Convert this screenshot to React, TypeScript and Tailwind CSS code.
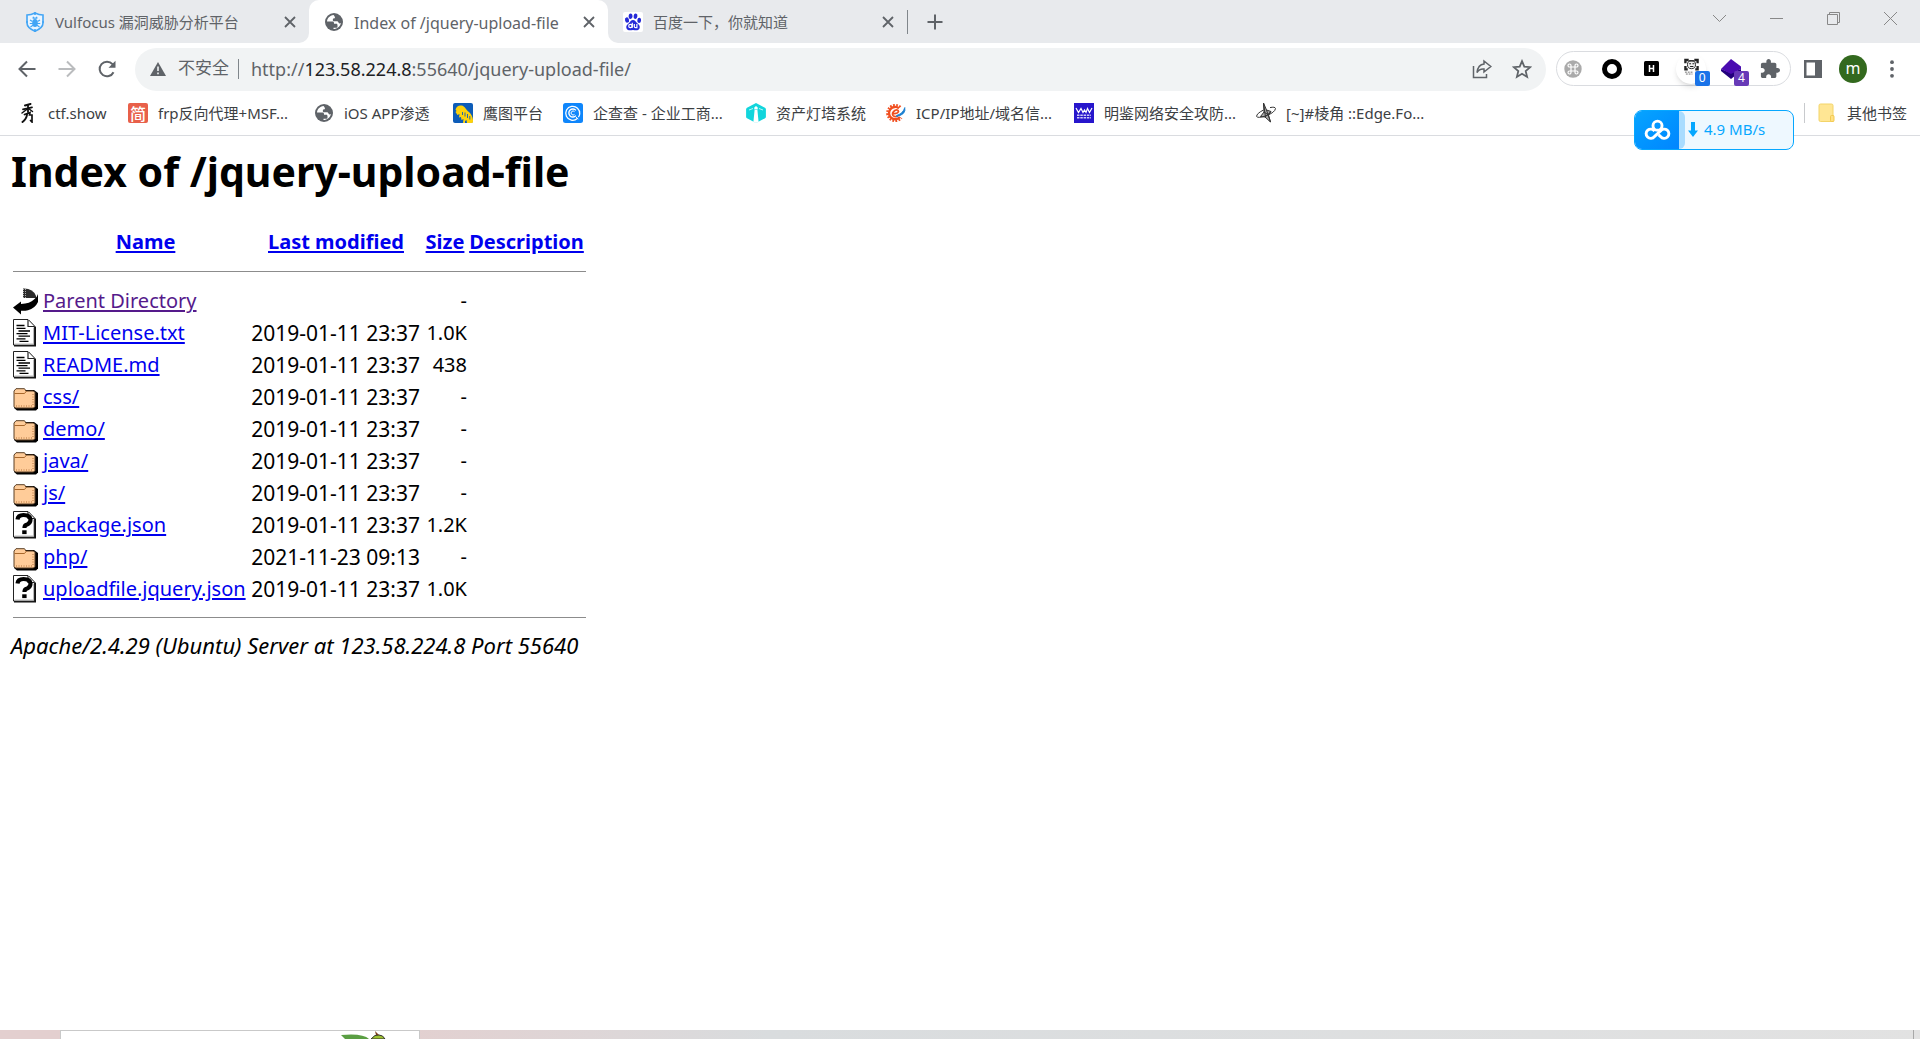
import React from "react";

const ui = "font-['Noto_Sans','Noto_Sans_CJK_SC',sans-serif]";

/* ---------- tab and bookmark icons ---------- */

const ShieldIcon = () => (
  <svg width="20" height="20" viewBox="0 0 20 20" fill="none" className="shrink-0">
    <path d="M10 1 Q14 3 18 3 V11 Q18 16 10 19.2 Q2 16 2 11 V3 Q6 3 10 1Z" stroke="#42a5f5" strokeWidth="1.6" fill="#eaf5ff" />
    <ellipse cx="10" cy="11" rx="2.8" ry="4" fill="#42a5f5" />
    <path d="M7.6 6.2h4.8M5 8l2.5 1.5M15 8l-2.500 1.500M4.800 11.500h10.400M5.500 15l2.500-1.800M14.500 15l-2.500-1.800M8 4.800l1 1.700M12 4.800l-1 1.700" stroke="#42a5f5" strokeWidth="1.200" />
    <path d="M10 0v3M10 17v3M1 10h2M17 10h2" stroke="#42a5f5" strokeWidth="1.600" />
  </svg>
);

const GlobeIcon = () => (
  <svg width="20" height="20" viewBox="0 0 20 20" className="shrink-0">
    <circle cx="10" cy="10" r="9" fill="#5f6368" />
    <path d="M9.500 3C5.800 3.500 3.200 6.200 3 9.500h5.500c1 0 1.500.6 1.500 1.500v.8h2.200c1 0 1.300.7 1.300 1.400v1.300c0 .8-.6 1.300-1.400 1.300h-2.600v1.300c3.600 0 6.700-2.500 7.400-6-.9.7-2 .5-2.400-.5-.3-.9-.9-1.300-1.900-1.300h-2.200c-1 0-1.600-.7-1.600-1.600s.6-1.500 1.500-1.500h.6V5.200c0-.8-.7-1.300-1.400-2.200z" fill="#fff" />
  </svg>
);

const BaiduIcon = () => (
  <svg width="20" height="20" viewBox="0 0 20 20" className="shrink-0">
    <rect width="20" height="20" rx="2" fill="#fff" />
    <g fill="#2529d8">
      <ellipse cx="4" cy="8" rx="2" ry="2.700" transform="rotate(-15 4 8)" />
      <ellipse cx="7.600" cy="4.200" rx="1.900" ry="2.800" />
      <ellipse cx="12.500" cy="4.200" rx="1.900" ry="2.800" transform="rotate(10 12.500 4.200)" />
      <ellipse cx="16.200" cy="8.400" rx="1.900" ry="2.600" transform="rotate(10 16.200 8.400)" />
      <path d="M10 8c2 0 2.800 1.800 4 3 1.500 1.400 3.200 2.300 2.700 4.800-.6 3.200-3.700 2.500-6.700 2.300-3 .2-6 .9-6.700-2.300-.4-2.500 1.300-3.400 2.800-4.800C7.300 9.800 8 8 10 8z" />
    </g>
    <g fill="none" stroke="#fff" strokeWidth="1.200">
      <circle cx="7.400" cy="14" r="1.700" />
      <path d="M9.300 10.800v5M11.300 12v2.500q0 1.200 1.300 1.200h1.300V12" />
    </g>
  </svg>
);

const CtfIcon = () => (
  <svg width="20" height="20" viewBox="0 0 20 20" fill="none" stroke="#111" strokeLinecap="round" className="shrink-0">
    <path d="M7 2.500 12.500 1" strokeWidth="2" />
    <path d="M5 6.300 14 4.300M10 2v7" strokeWidth="1.800" />
    <path d="M10 5.500 4 10M10.500 5.500l4 3" strokeWidth="1.500" />
    <path d="M6.500 11.500 12 9.500 11.500 12l2.500 0V19l-1.500-1.500" strokeWidth="1.700" />
    <path d="M9 11.500Q8.500 16 4.500 19" strokeWidth="2" />
  </svg>
);

const JianIcon = () => (
  <span className="flex size-5 shrink-0 items-center justify-center rounded-xs bg-[#e8604a] font-['Noto_Sans_CJK_SC',sans-serif] text-base leading-none font-medium text-white">
    简
  </span>
);

const EagleIcon = () => (
  <svg width="20" height="20" viewBox="0 0 20 20" className="shrink-0">
    <rect width="20" height="20" rx="2" fill="#0d5cb8" />
    <path d="M2.500 6.500C3.500 3 6 2 8.500 2.500 12 3 13 7 16 9c2 1.500 3.800 5 4 8v1.500q0 1.500-1.500 1.500H14l-.5-3-1.500 1v2H10l.5-4-2 1-.5-3-2 .5.500-3.500-2 1L2.500 9l1-1z" fill="#fdd10a" />
    <path d="M9.500 9v3M12 9.500v4M14.500 11v4M16.800 13v3.500" stroke="#0d5cb8" strokeWidth=".9" />
  </svg>
);

const QccIcon = () => (
  <svg width="20" height="20" viewBox="0 0 20 20" fill="none" className="shrink-0">
    <rect width="20" height="20" rx="2.500" fill="#0f86fb" />
    <path d="M14.300 15.600A7 7 0 1 1 16.700 11q-.2 1.800-1.300 3" stroke="#fff" strokeWidth="1.300" />
    <path d="M12.900 12.600A4 4 0 1 1 12.900 7.400" stroke="#fff" strokeWidth="1.400" />
    <path d="M11.500 11.400a2 2 0 1 1 0-2.800M12.800 14l2.500 2" stroke="#fff" strokeWidth="1" />
  </svg>
);

const LighthouseIcon = () => (
  <svg width="20" height="20" viewBox="0 0 20 20" className="shrink-0">
    <path d="M10 0 19 4.800q.9.500.9 1.500v7.400q0 1-.9 1.500L10 20 1 15.200q-.9-.5-.9-1.500V6.300q0-1 .9-1.500z" fill="#12d5dc" />
    <path d="M8.600 7h2.800L12.600 19 10 20 7.400 19zM8.300 4.500 10 3l1.700 1.500v2H8.300z" fill="#fff" />
    <path d="M7 5.500 3 7M13 5.500 17 7" stroke="#b8f5f6" strokeWidth="1" />
  </svg>
);

const IcpIcon = () => (
  <svg width="20" height="20" viewBox="0 0 20 20" fill="none" className="shrink-0">
    <path d="M14.500 4A8 8 0 1 0 15.500 15" stroke="#f04e1f" strokeWidth="2.200" strokeDasharray="1.700 1.360" />
    <path d="M13 5.200A6.200 6.200 0 1 0 14 14" stroke="#f04e1f" strokeWidth="2.400" />
    <path d="M6.500 10.500Q11.500 11 12.500 8.500 12 6 8.800 7.500 5.500 10 7 12.500 8.500 14.500 12 13" stroke="#f04e1f" strokeWidth="1.700" />
    <path d="M10.500 12.500Q17 10.500 18.800 4.500 20.500 11.500 10.500 13.500z" fill="#1b7fd0" stroke="#1b7fd0" strokeWidth=".8" />
  </svg>
);

const MingIcon = () => (
  <svg width="20" height="20" viewBox="0 0 20 20" fill="none" className="shrink-0">
    <rect width="20" height="20" fill="#2716cc" />
    <path d="M2 5 4.500 9.500 7 5.500 9 9.500 10.500 7 12 9.500 13.500 5.500 15.500 9.500 18 5" stroke="#fff" strokeWidth="1.200" />
    <path d="M3 12.200h14M3 14.800h14" stroke="#cfcaf7" strokeWidth="1.600" strokeDasharray="2.500 .8" />
  </svg>
);

const EdgeForumIcon = () => (
  <svg width="20" height="20" viewBox="0 0 20 20" fill="none" stroke="#333" strokeWidth="1" className="shrink-0">
    <path d="M7.500 0 10.500 7 15 8.500 12.500 12 14.500 19 9 14 4.500 13.500 8 9z" fill="#aaa" />
    <path d="M7.500 0 9.500 14M14.500 19 10.500 7M8 9l4.500 3M15 8.500 9 14" />
    <path d="M14 4.600Q19 3.500 19.500 5.500 19 9.500 10 12.800 2 15.500.6 13.500.5 10.500 7.500 7" />
  </svg>
);

const FolderTabIcon = () => (
  <svg width="20" height="20" viewBox="0 0 20 20" className="shrink-0">
    <path d="M3.500 1h11q1.500 0 1.500 1.500V13h.5v4.500q0 1-1 1h-12Q2 18.500 2 17V2.500Q2 1 3.500 1z" fill="#ffe694" stroke="#f3d469" />
    <rect x="13.500" y="12.500" width="3.500" height="6" rx="1" fill="#ffe082" stroke="#f3c94f" />
  </svg>
);

/* ---------- directory listing icons ---------- */

const BackIcon = () => (
  <svg width="25" height="28" viewBox="0 0 25 28">
    <path d="M10 1.500Q20 1 23 9V11L10 11z" fill="#2b2b2b" />
    <path d="M10 2.500h4M10 4.500h4M10 6.500h4M10 8.500h4M10 10.500h4" stroke="#aaa" strokeWidth="1" strokeDasharray="1 1" />
    <path d="M25 7V15Q22 21.500 15 23.200 12 24 8 23.800V27.500L0 20.500 8 14.500V17Q17 16.500 21 12.500 24 10.500 25 7z" fill="#000" />
  </svg>
);

const Sheet = ({ children }: { children: React.ReactNode }) => (
  <svg width="25" height="28" viewBox="0 0 25 28" fill="none">
    <path d="M1 1H16L23 8V27.500H1z" fill="#111" />
    <path d="M.5.500H15L21.500 7.500V26H.5z" fill="#fff" stroke="#222" strokeWidth="1" />
    <path d="M20.500 8.500V25H1.500" stroke="#bbb" strokeWidth="1" />
    <path d="M15 1V7.500H21.500" stroke="#222" strokeWidth="1.200" fill="#fff" />
    {children}
  </svg>
);

const TextIcon = () => (
  <Sheet>
    <path d="M3.500 6.500h8M3.500 9.300h9M5.500 12H17M3.500 14.600h11M5.500 17.200H17M3.500 19.800h9M6.500 22.400h9" stroke="#000" strokeWidth="1.300" />
  </Sheet>
);

const UnknownIcon = () => (
  <Sheet>
    <path d="M4.500 8.500Q5 4 10.500 4q6.500 0 7 4.500 0 4-4.500 5.500-1.500.6-1.500 3" stroke="#000" strokeWidth="4.200" />
    <path d="M9.200 19.300h4.400v3.800h-4.400z" fill="#000" />
  </Sheet>
);

const FolderIcon = () => (
  <svg width="25" height="28" viewBox="0 0 25 28" fill="none">
    <path d="M3 7H21l4 3V25.500l-2 2H4L1 25z" fill="#000" />
    <path d="M1 8 3 5.700H11.500L13 8H20.500L22 9.500V23.500L20.500 25H2.500L1 23.500z" fill="#ffcc99" stroke="#5a3f25" strokeWidth="1" />
    <path d="M1.500 10.500H11.500L13.500 8" stroke="#a8672b" strokeWidth="1" />
    <path d="M3 23h17M20 11v12" stroke="#b5733a" strokeWidth="1" strokeDasharray="1 1.500" />
  </svg>
);

/* ---------- browser chrome ---------- */

const CloseGlyph = () => (
  <svg width="12" height="12" viewBox="0 0 12 12" stroke="#5f6368" strokeWidth="1.800">
    <path d="M1 1 11 11M11 1 1 11" />
  </svg>
);

function Tab({ icon, title, active }: { icon: React.ReactNode; title: string; active?: boolean }) {
  return (
    <div
      className={
        "relative flex h-full w-[299px] items-center gap-2.5 pr-[11px] pl-[15px] " +
        (active ? "rounded-t-[10px] bg-white" : "")
      }
    >
      {active && (
        <>
          <span className="absolute bottom-0 -left-2.5 size-2.5 bg-white before:block before:size-full before:rounded-br-[10px] before:bg-[#e8eaed]" />
          <span className="absolute -right-2.5 bottom-0 size-2.5 bg-white before:block before:size-full before:rounded-bl-[10px] before:bg-[#e8eaed]" />
        </>
      )}
      {icon}
      <span className={"flex-1 truncate pt-0.5 text-[#5f6368] " + (active ? "text-base" : "text-[15px]")}>{title}</span>
      <button aria-label={"Close " + title} className="flex size-4 items-center justify-center">
        <CloseGlyph />
      </button>
    </div>
  );
}

function TabStrip() {
  return (
    <div className="flex h-[43px] shrink-0 items-center bg-[#e8eaed] pl-2.5">
      <Tab icon={<ShieldIcon />} title="Vulfocus 漏洞威胁分析平台" />
      <Tab icon={<GlobeIcon />} title="Index of /jquery-upload-file" active />
      <Tab icon={<BaiduIcon />} title="百度一下，你就知道" />
      <div className="mr-[19px] h-6 w-px bg-[#80868b]" />
      <button aria-label="New tab">
        <svg width="16" height="16" viewBox="0 0 16 16" stroke="#5f6368" strokeWidth="2">
          <path d="M8 0.500v15M0.500 8h15" />
        </svg>
      </button>
      <div className="ml-auto flex h-full items-center gap-11 pr-[23px] pb-1.5">
        <button aria-label="Search tabs">
          <svg width="13" height="13" viewBox="0 0 13 13" fill="none" stroke="#888">
            <path d="M0 3 6.500 9.500 13 3" />
          </svg>
        </button>
        <button aria-label="Minimize">
          <svg width="13" height="13" viewBox="0 0 13 13" stroke="#888">
            <path d="M0 6.500h13" />
          </svg>
        </button>
        <button aria-label="Restore">
          <svg width="13" height="13" viewBox="0 0 13 13" fill="none" stroke="#888">
            <path d="M.5 2.500h10v10H.5zM2.500 2.500v-2h10v10h-2" />
          </svg>
        </button>
        <button aria-label="Close window">
          <svg width="13" height="13" viewBox="0 0 13 13" stroke="#888">
            <path d="M0 0 13 13M13 0 0 13" />
          </svg>
        </button>
      </div>
    </div>
  );
}

function Extensions() {
  const slot = "relative flex w-10 items-center justify-center";
  return (
    <div className="ml-2.5 flex h-[35px] w-[235px] shrink-0 items-center rounded-full border border-[#dadce0] bg-white">
      <button aria-label="Shortcut extension" className="flex w-8 items-center justify-center">
        <svg width="18" height="18" viewBox="0 0 18 18" fill="none">
          <circle cx="9" cy="9" r="8.700" fill="#aaa" />
          <path d="M7 7V5.500A1.500 1.500 0 1 0 5.500 7h7A1.500 1.500 0 1 0 11 5.500v7a1.500 1.500 0 1 0 1.500-1.500h-7A1.500 1.500 0 1 0 7 12.500z" stroke="#fff" strokeWidth="1.200" />
        </svg>
      </button>
      <button aria-label="Ring extension" className={slot + " ml-1"}>
        <span className="size-5 rounded-full border-[5px] border-black" />
      </button>
      <button aria-label="HackBar" className={slot}>
        <svg width="15" height="15" viewBox="0 0 15 15">
          <rect width="15" height="15" rx="1.500" fill="#000" />
          <path d="M5.500 4v7M9.500 4v7M5.500 7.500h4" stroke="#fff" strokeWidth="1.500" />
        </svg>
      </button>
      <button aria-label="Scanner extension, 0" className={slot}>
        <span className="flex size-[30px] items-center justify-center rounded-full bg-white pb-1 shadow-md">
          <svg width="15" height="18" viewBox="0 0 16 18" fill="none" stroke="#222">
            <path d="M1.500 5V1.500H5M11 1.500h3.500V5M1.500 8v3.500H4M14.500 8v3.500H12" strokeWidth="2.500" />
            <circle cx="8" cy="6.500" r="4.300" fill="#eee" />
            <path d="M5.500 5.500h2M9 5.500h2M6.500 8.500h3.500M5 2.500h6" strokeWidth="1.200" />
            <path d="M1 14.500h9M2 16.500h7" stroke="#666" strokeDasharray="2 1" />
          </svg>
        </span>
        <span className="absolute top-[17px] left-[23px] flex size-[15px] items-center justify-center rounded-xs bg-[#1a73e8] text-xs leading-none text-white">0</span>
      </button>
      <button aria-label="Layers extension, 4" className={slot}>
        <svg width="20" height="20" viewBox="0 0 20 20">
          <path d="M0 10 10 14 20 10V12L10 20 0 12z" fill="#22007c" />
          <path d="M10 0 20 7.500V10L10 15 0 10z" fill="#4a0bb0" />
        </svg>
        <span className="absolute top-3 left-[23px] flex size-[15px] items-center justify-center rounded-xs bg-[#673ab7] text-xs leading-none text-white">4</span>
      </button>
      <button aria-label="Extensions" className={slot}>
        <svg width="20" height="20" viewBox="1 1 22 22" fill="#5f6368">
          <path d="M20.500 11H19V7c0-1.100-.9-2-2-2h-4V3.500C13 2.120 11.880 1 10.500 1S8 2.120 8 3.500V5H4c-1.100 0-1.990.9-1.990 2v3.800H3.500c1.490 0 2.700 1.210 2.700 2.700s-1.210 2.700-2.700 2.700H2V20c0 1.100.9 2 2 2h3.800v-1.500c0-1.490 1.210-2.700 2.700-2.700 1.490 0 2.700 1.210 2.700 2.700V22H17c1.100 0 2-.9 2-2v-4h1.500c1.380 0 2.500-1.120 2.500-2.500S21.880 11 20.500 11z" />
        </svg>
      </button>
    </div>
  );
}

function Toolbar() {
  return (
    <div className="flex h-[53px] shrink-0 items-center bg-white pl-[18px]">
      <div className="flex items-center gap-[22px] pb-0.5">
        <button aria-label="Back">
          <svg width="18" height="18" viewBox="0 0 18 18" fill="none" stroke="#5f6368" strokeWidth="2">
            <path d="M17.500 9H2M9 1.500 1.500 9 9 16.500" />
          </svg>
        </button>
        <button aria-label="Forward">
          <svg width="18" height="18" viewBox="0 0 18 18" fill="none" stroke="#babcbe" strokeWidth="2">
            <path d="M.5 9H16M9 1.500 16.500 9 9 16.500" />
          </svg>
        </button>
        <button aria-label="Reload">
          <svg width="18" height="18" viewBox="0 0 18 18" fill="none">
            <path d="M15.500 12.200A7.300 7.300 0 1 1 14.500 4.200L15.500 5.400" stroke="#5f6368" strokeWidth="2" />
            <path d="M17.500 0.800V7.800H10.500z" fill="#5f6368" />
          </svg>
        </button>
      </div>
      <div className="ml-[19px] flex h-[43px] min-w-0 flex-1 items-center rounded-full bg-[#f1f3f4] pr-3.5 pb-0.5 pl-[15px] text-lg">
        <svg width="16" height="14" viewBox="0 0 16 14" className="shrink-0">
          <path d="M8 0 16 14H0z" fill="#5f6368" />
          <path d="M8 4.500v4.500M8 10.500v1.800" stroke="#f1f3f4" strokeWidth="1.600" />
        </svg>
        <span className="ml-3 text-[17px] whitespace-nowrap text-[#5f6368]">不安全</span>
        <span className="mr-3 ml-[9px] h-5 w-px shrink-0 bg-[#80868b]" />
        <span className="flex-1 truncate text-[#5f6368]">
          http://<span className="text-[#202124]">123.58.224.8</span>:55640/jquery-upload-file/
        </span>
        <button aria-label="Share" className="shrink-0">
          <svg width="20" height="20" viewBox="0 0 20 20" fill="none" stroke="#5f6368" strokeWidth="1.500">
            <path d="M1.500 7v11.500h13V15" />
            <path d="M12 2 18.800 7.500 12 13V10Q7.500 9.500 5 13.500 6 5.500 12 5z" />
          </svg>
        </button>
        <button aria-label="Bookmark this page" className="ml-5 shrink-0">
          <svg width="20" height="20" viewBox="0 0 20 20" fill="none" stroke="#5f6368" strokeWidth="1.800">
            <path d="M10 2.200 12.300 7.700 18.200 8.200 13.700 12.100 15.100 17.900 10 14.800 4.900 17.900 6.300 12.100 1.800 8.200 7.700 7.700z" />
          </svg>
        </button>
      </div>
      <div className="flex items-center pb-0.5">
        <Extensions />
        <button aria-label="Side panel" className="ml-[13px]">
          <svg width="18" height="18" viewBox="0 0 18 18">
            <path d="M0 0H18V18H0zM2.500 2.500V15.500H11V2.500z" fill="#5f6368" fillRule="evenodd" />
          </svg>
        </button>
        <button aria-label="Profile" className="ml-[17px] flex size-7 items-center justify-center rounded-full bg-[#33691e] pb-0.5 text-base leading-none text-white">
          m
        </button>
        <button aria-label="Menu" className="mr-[26px] ml-[23px]">
          <svg width="4" height="18" viewBox="0 0 4 18" fill="#5f6368">
            <circle cx="2" cy="2.200" r="1.900" />
            <circle cx="2" cy="9" r="1.900" />
            <circle cx="2" cy="15.800" r="1.900" />
          </svg>
        </button>
      </div>
    </div>
  );
}

const bookmarks = [
  { label: "ctf.show", width: "w-[110px]", icon: <CtfIcon /> },
  { label: "frp反向代理+MSF...", width: "w-[186px]", icon: <JianIcon /> },
  { label: "iOS APP渗透", width: "w-[139px]", icon: <GlobeIcon /> },
  { label: "鹰图平台", width: "w-[110px]", icon: <EagleIcon /> },
  { label: "企查查 - 企业工商...", width: "w-[183px]", icon: <QccIcon /> },
  { label: "资产灯塔系统", width: "w-[140px]", icon: <LighthouseIcon /> },
  { label: "ICP/IP地址/域名信...", width: "w-[188px]", icon: <IcpIcon /> },
  { label: "明鉴网络安全攻防...", width: "w-[182px]", icon: <MingIcon /> },
  { label: "[~]#棱角 ::Edge.Fo...", width: "w-[182px]", icon: <EdgeForumIcon /> },
];

function BookmarksBar() {
  return (
    <nav className="flex h-10 shrink-0 items-center border-b border-[#dadce0] bg-white pb-[5px] pl-[18px] text-[15px] text-[#3c4043]">
      {bookmarks.map((b) => (
        <a key={b.label} href="#" className={"flex shrink-0 items-center gap-2.5 whitespace-nowrap " + b.width}>
          {b.icon}
          {b.label}
        </a>
      ))}
      <div className="ml-auto h-5 w-px bg-[#c8cacd]" />
      <a href="#" className="mr-[13px] ml-3 flex items-center gap-2.5 whitespace-nowrap">
        <FolderTabIcon />
        其他书签
      </a>
    </nav>
  );
}

function SpeedWidget() {
  return (
    <div className="absolute top-[110px] right-[126px] flex h-10 w-40 overflow-hidden rounded-lg border border-[#06a7ff] bg-[#eef8ff] text-[#06a7ff]">
      <div className="flex w-11 items-center justify-center bg-linear-to-br from-[#08a4ff] to-[#0385ff]">
        <svg width="27" height="22" viewBox="0 0 28 22" fill="none" stroke="#fff" strokeWidth="3">
          <circle cx="14" cy="6.500" r="4.700" />
          <path d="M11 12.200A4.800 4.800 0 1 0 10.800 17.800L17 12.200A4.800 4.800 0 1 1 17.200 17.800L15.200 16" />
        </svg>
      </div>
      <div className="w-1.5 rounded-r-full bg-[#a9dcff]" />
      <div className="flex items-center gap-1.5 pb-0.5 pl-[3px] text-[15px]">
        <svg width="10" height="15" viewBox="0 0 10 15" fill="#06a7ff">
          <path d="M3 0H7V8.500H10L5 15 0 8.500H3z" />
        </svg>
        4.9 MB/s
      </div>
    </div>
  );
}

/* ---------- page ---------- */

type Row = { icon: React.ReactNode; name: string; date: string; size: string; visited?: boolean };

const rows: Row[] = [
  { icon: <BackIcon />, name: "Parent Directory", date: "", size: "-", visited: true },
  { icon: <TextIcon />, name: "MIT-License.txt", date: "2019-01-11 23:37", size: "1.0K" },
  { icon: <TextIcon />, name: "README.md", date: "2019-01-11 23:37", size: "438" },
  { icon: <FolderIcon />, name: "css/", date: "2019-01-11 23:37", size: "-" },
  { icon: <FolderIcon />, name: "demo/", date: "2019-01-11 23:37", size: "-" },
  { icon: <FolderIcon />, name: "java/", date: "2019-01-11 23:37", size: "-" },
  { icon: <FolderIcon />, name: "js/", date: "2019-01-11 23:37", size: "-" },
  { icon: <UnknownIcon />, name: "package.json", date: "2019-01-11 23:37", size: "1.2K" },
  { icon: <FolderIcon />, name: "php/", date: "2021-11-23 09:13", size: "-" },
  { icon: <UnknownIcon />, name: "uploadfile.jquery.json", date: "2019-01-11 23:37", size: "1.0K" },
];

const link = "text-[#0000ee] underline decoration-2 underline-offset-2";

function Listing() {
  return (
    <main className="min-h-0 flex-1 bg-white px-[11px] pt-[9px] text-xl text-black">
      <h1 className="text-[41px] leading-[52px] font-bold">Index of /jquery-upload-file</h1>
      <table className="mt-7 ml-px table-fixed border-collapse whitespace-nowrap">
        <colgroup>
          <col className="w-[30px]" />
          <col className="w-[207px]" />
          <col className="w-[174px]" />
          <col className="w-[44px]" />
          <col className="w-[119px]" />
        </colgroup>
        <thead>
          <tr className="h-[34px]">
            <th />
            <th><a href="#" className={link}>Name</a></th>
            <th><a href="#" className={link}>Last modified</a></th>
            <th><a href="#" className={link}>Size</a></th>
            <th><a href="#" className={link}>Description</a></th>
          </tr>
        </thead>
        <tbody>
          <tr>
            <td colSpan={5} className="pt-3 pb-[13px] pl-px"><hr className="border-[#8c8c8c]" /></td>
          </tr>
          {rows.map((r) => (
            <tr key={r.name} className="h-8 leading-8">
              <td className="pl-px align-middle">{r.icon}</td>
              <td className="pl-px">
                <a href="#" className={r.visited ? "text-[#551a8b] underline decoration-2 underline-offset-2" : link}>{r.name}</a>
              </td>
              <td className="pr-[3px] text-right text-[21px]">{r.date}</td>
              <td className="text-right">{r.size}</td>
              <td />
            </tr>
          ))}
          <tr>
            <td colSpan={5} className="pt-3 pb-[13px] pl-px"><hr className="border-[#8c8c8c]" /></td>
          </tr>
        </tbody>
      </table>
      <address className="text-[22px] leading-7 italic">Apache/2.4.29 (Ubuntu) Server at 123.58.224.8 Port 55640</address>
    </main>
  );
}

function Taskbar() {
  return (
    <footer className="flex h-[9px] shrink-0 overflow-hidden bg-linear-to-r from-[#e3cfcf] from-20% via-[#d9dcde] via-40% to-[#e2e2e2]">
      <div className="ml-[60px] flex h-full w-[360px] shrink-0 justify-end border border-b-0 border-[#c9c9c9] bg-white pr-8">
        <svg width="46" height="8" viewBox="0 0 46 8">
          <path d="M0 4Q22 2 28 8H4z" fill="#5a9e43" />
          <path d="M30 8Q34 3 38 4 42 4 44 8z" fill="#9dc22f" stroke="#333" />
          <path d="M35 4 34 0 38 4" fill="#7a3b1d" />
        </svg>
      </div>
      <time className="mr-[85px] ml-auto pt-1.5 text-[15px] leading-none text-black">21:37</time>
      <div className="mr-1.5 w-px bg-[#a8a8a8]" />
    </footer>
  );
}

export default function App() {
  return (
    <div className={"relative flex h-screen flex-col overflow-hidden bg-white " + ui}>
      <TabStrip />
      <Toolbar />
      <BookmarksBar />
      <Listing />
      <Taskbar />
      <SpeedWidget />
    </div>
  );
}
